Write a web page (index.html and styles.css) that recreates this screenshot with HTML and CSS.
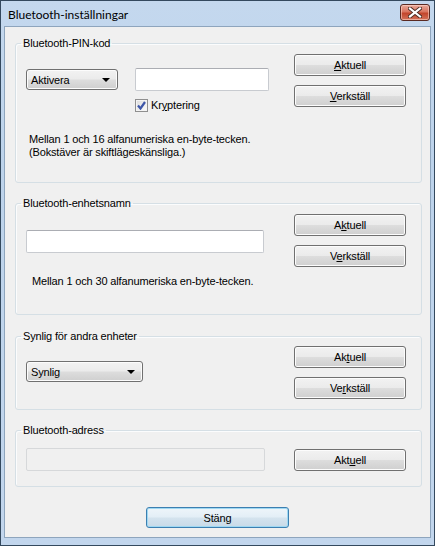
FILE: index.html
```html
<!DOCTYPE html>
<html lang="sv">
<head>
<meta charset="utf-8">
<title>Bluetooth-inställningar</title>
<link rel="stylesheet" href="styles.css">
</head>
<body>
<div class="window">
  <div class="titlebar">
    <span class="title">Bluetooth-inställningar</span>
    <button class="close" aria-label="Stäng">
      <svg width="14" height="11" viewBox="0 0 14 11"><path d="M2 1.5 L12 9.5 M12 1.5 L2 9.5" stroke="#4a2a22" stroke-width="4" stroke-linecap="square"/><path d="M2 1.5 L12 9.5 M12 1.5 L2 9.5" stroke="#ffffff" stroke-width="2.2" stroke-linecap="square"/></svg>
    </button>
  </div>
  <div class="client">
    <fieldset class="group g1">
      <legend>Bluetooth-PIN-kod</legend>
      <div class="group-body">
        <div class="left">
          <div class="row">
            <div class="combo combo-pin"><span>Aktivera</span><span class="arrow"></span></div>
            <div class="edit edit-pin"></div>
          </div>
          <div class="check-row">
            <span class="checkbox">
              <svg width="9" height="9" viewBox="0 0 9 9"><path d="M1 4.5 L3.5 7.5 L8 1" fill="none" stroke="#3d56a8" stroke-width="2.2"/></svg>
            </span>
            <span>Kr<u>y</u>ptering</span>
          </div>
          <p class="note note1">Mellan 1 och 16 alfanumeriska en-byte-tecken.<br>(Bokstäver är skiftlägeskänsliga.)</p>
        </div>
        <div class="buttons">
          <button class="btn"><u>A</u>ktuell</button>
          <button class="btn"><u>V</u>erkställ</button>
        </div>
      </div>
    </fieldset>

    <fieldset class="group g2">
      <legend>Bluetooth-enhetsnamn</legend>
      <div class="group-body">
        <div class="left">
          <div class="edit edit-name"></div>
          <p class="note note2">Mellan 1 och 30 alfanumeriska en-byte-tecken.</p>
        </div>
        <div class="buttons">
          <button class="btn">A<u>k</u>tuell</button>
          <button class="btn">V<u>e</u>rkställ</button>
        </div>
      </div>
    </fieldset>

    <fieldset class="group g3">
      <legend>Synlig för andra enheter</legend>
      <div class="group-body">
        <div class="left">
          <div class="combo combo-vis"><span>Synlig</span><span class="arrow"></span></div>
        </div>
        <div class="buttons">
          <button class="btn">Ak<u>t</u>uell</button>
          <button class="btn">Ve<u>r</u>kställ</button>
        </div>
      </div>
    </fieldset>

    <fieldset class="group g4">
      <legend>Bluetooth-adress</legend>
      <div class="group-body">
        <div class="left">
          <div class="edit edit-addr disabled"></div>
        </div>
        <div class="buttons">
          <button class="btn">Akt<u>u</u>ell</button>
        </div>
      </div>
    </fieldset>

    <div class="footer">
      <button class="btn default">Stäng</button>
    </div>
  </div>
</div>
</body>
</html>
```
FILE: styles.css
```css
* { box-sizing: border-box; }
html, body { margin: 0; padding: 0; }
body {
  width: 435px;
  height: 546px;
  overflow: hidden;
  background: #ffffff;
  font-family: "Liberation Sans", Arial, sans-serif;
  font-size: 11px;
  letter-spacing: -0.15px;
  color: #000;
}
.window {
  width: 435px;
  height: 546px;
  border: 1px solid #34495e;
  background: linear-gradient(#c4d8ee 0%, #bdd3eb 30%, #c2d6ed 100%);
  display: flex;
  flex-direction: column;
}
.titlebar {
  height: 25px;
  flex: none;
  display: flex;
  align-items: flex-start;
  padding: 0 4px 0 7px;
}
.title {
  font-family: "Lato", "Noto Sans", sans-serif;
  font-size: 12px;
  line-height: 15px;
  letter-spacing: 0;
  margin-top: 6px;
  color: #000;
}
.close {
  margin-left: auto;
  margin-top: 3px;
  width: 30px;
  height: 17px;
  border: 1px solid #5a2a22;
  border-radius: 3px;
  padding: 0;
  display: flex;
  align-items: center;
  justify-content: center;
  background: linear-gradient(#e9a99a 0%, #d9745f 45%, #c2452c 55%, #d3735b 100%);
  box-shadow: inset 0 0 0 1px rgba(255, 220, 210, 0.55);
}
.client {
  flex: 1;
  margin: 0 3px 7px 3px;
  border: 1px solid #8ea5bd;
  background: #f0f0f0;
  display: flex;
  flex-direction: column;
  padding-top: 10px;
}
.group {
  margin: 0 8px 0 10px;
  padding: 0;
  border: 1px solid #d5dfe5;
  border-radius: 3px;
  box-shadow: inset 1px 1px 0 #fbfcfd;
  min-width: 0;
}
.group + .group { margin-top: 14px; }
.g3 { margin-top: 15px !important; }
.group legend {
  margin-left: 5px;
  padding: 0 2px;
  line-height: 13px;
  font-size: 11px;
}
.group-body {
  display: grid;
  grid-template-columns: 1fr 112px;
  padding: 4px 15px 0 10px;
}
.left { display: flex; flex-direction: column; align-items: flex-start; }
.buttons { display: flex; flex-direction: column; gap: 9px; }

.btn {
  font-family: inherit;
  font-size: 11px;
  letter-spacing: inherit;
  height: 22px;
  width: 100%;
  padding: 0;
  color: #000;
  border: 1px solid #707070;
  border-radius: 3px;
  background: linear-gradient(#f2f2f2 0%, #ebebeb 48%, #dddddd 52%, #cfcfcf 100%);
  box-shadow: inset 0 0 0 1px #fcfcfc;
}
.btn u { text-underline-offset: 1px; }

.combo {
  height: 21px;
  border: 1px solid #707070;
  border-radius: 3px;
  background: linear-gradient(#f2f2f2 0%, #ebebeb 48%, #dddddd 52%, #cfcfcf 100%);
  box-shadow: inset 0 0 0 1px #fcfcfc;
  display: flex;
  align-items: center;
  justify-content: space-between;
  padding: 0 7px 0 4px;
}
.arrow {
  width: 0;
  height: 0;
  border-left: 4px solid transparent;
  border-right: 4px solid transparent;
  border-top: 4px solid #000;
}
.combo-pin { width: 92px; }
.combo-vis { width: 117px; margin-top: 15px; }

.edit {
  height: 23px;
  background: #fff;
  border: 1px solid #c8cbd0;
  border-top-color: #abadb3;
  border-radius: 2px;
}
.edit.disabled { background: #f0f0f0; border-color: #d6d8da; }

.g1 .left > .row {
  margin-top: 14px;
  display: flex;
  align-items: center;
  gap: 17px;
}
.edit-pin { width: 134px; }
.check-row {
  margin-top: 8px;
  margin-left: 109px;
  display: flex;
  align-items: center;
  gap: 3px;
  line-height: 13px;
}
.checkbox {
  width: 13px;
  height: 13px;
  border: 1px solid #8f8f8f;
  background: linear-gradient(135deg, #dcdcdc, #fbfbfb);
  box-shadow: inset 0 0 0 1px #f4f4f4;
  display: flex;
  align-items: center;
  justify-content: center;
}
.note { margin: 0; line-height: 13px; }
.note1 { margin-top: 21px; margin-left: 3px; margin-bottom: 23px; }

.edit-name { width: 238px; margin-top: 16px; }
.note2 { margin-top: 22px; margin-left: 6px; margin-bottom: 26px; }

.g3 .group-body { padding-top: 3px; padding-bottom: 10px; }

.g4 .group-body { padding-top: 11px; padding-bottom: 15px; }
.edit-addr { width: 239px; }
.g4 .buttons { padding-top: 1px; }

.footer {
  margin-top: 20px;
  display: flex;
  justify-content: center;
}
.btn.default {
  width: 143px;
  height: 21px;
  border-color: #3c7fb1;
  box-shadow: inset 0 0 0 1px #9fd8f2;
  background: linear-gradient(#eef5fa 0%, #e3eef6 48%, #d4e3ee 52%, #c8dae8 100%);
}
```
